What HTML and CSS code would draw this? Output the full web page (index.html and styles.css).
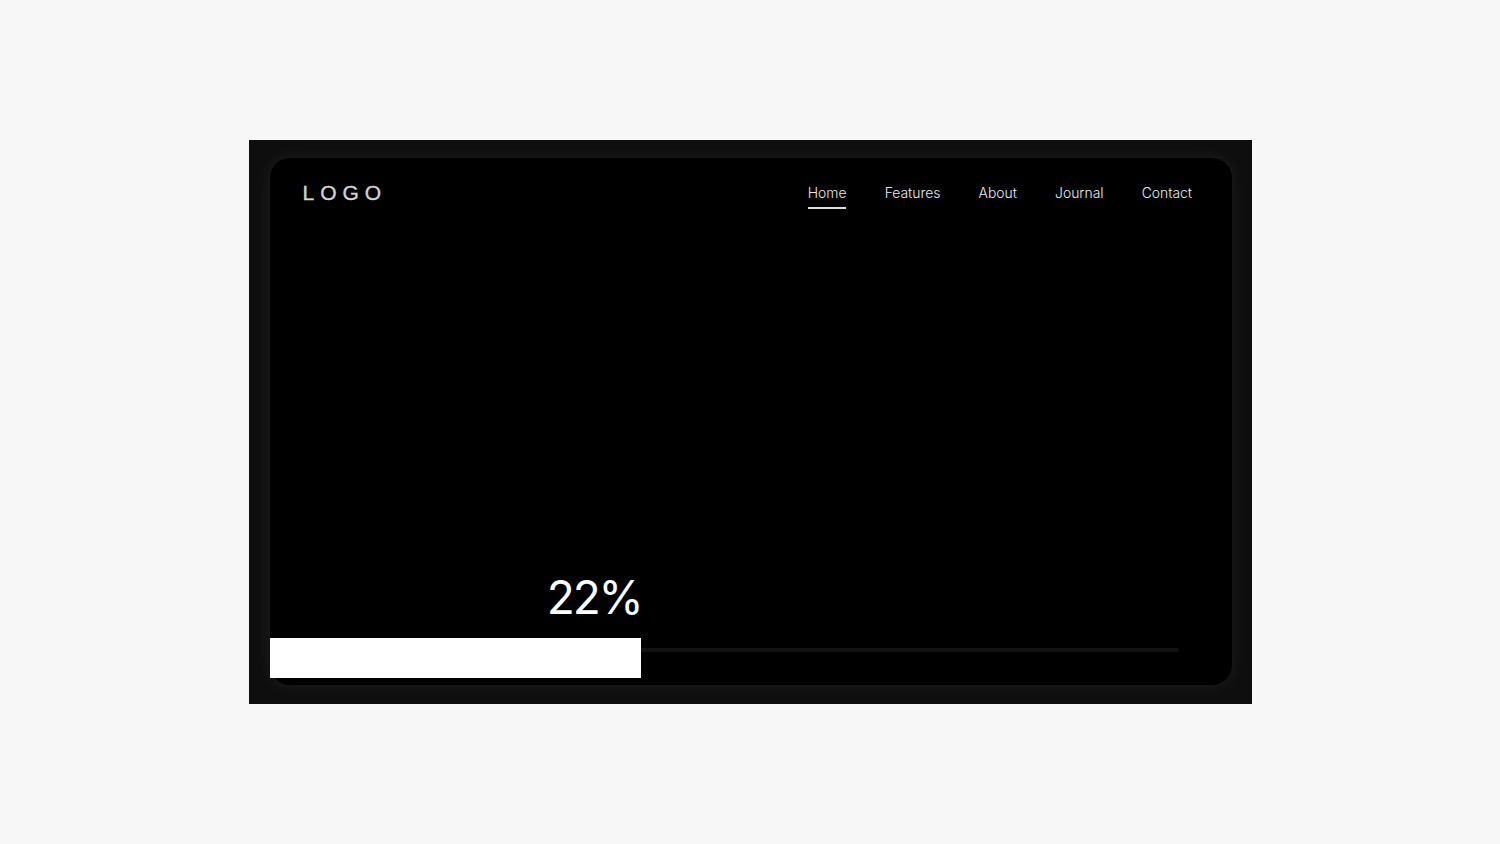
FILE: index.html
```html
<!DOCTYPE html>
<html lang="en">
<head>
<meta charset="utf-8">
<title>Loading</title>
<link rel="stylesheet" href="styles.css">
</head>
<body>
<main class="frame">
  <section class="screen">
    <header class="topbar">
      <div class="logo">LOGO</div>
      <nav class="nav">
        <a class="nav-link is-active" href="#">Home</a>
        <a class="nav-link" href="#">Features</a>
        <a class="nav-link" href="#">About</a>
        <a class="nav-link" href="#">Journal</a>
        <a class="nav-link" href="#">Contact</a>
      </nav>
    </header>
    <div class="loader">
      <div class="percent">22%</div>
      <div class="progress">
        <div class="progress-fill"></div>
        <div class="progress-track"></div>
      </div>
    </div>
  </section>
</main>
</body>
</html>
```
FILE: styles.css
```css
* { box-sizing: border-box; }
html, body { height: 100%; }
body {
  margin: 0;
  background: #f7f7f7;
  display: flex;
  align-items: center;
  justify-content: center;
  font-family: "Inter", "Liberation Sans", sans-serif;
}
.frame {
  width: 1003px;
  height: 564px;
  padding: 18px 20px 19px 21px;
  background: #0e0e0e;
  display: flex;
}
.screen {
  flex: 1;
  background: #000;
  border-radius: 20px;
  box-shadow: 0 0 14px 3px rgba(255, 255, 255, 0.05);
  display: flex;
  flex-direction: column;
  justify-content: space-between;
  padding-bottom: 7px;
}
.topbar {
  display: flex;
  justify-content: space-between;
  align-items: flex-start;
  padding: 24px 39.5px 0 33px;
}
.logo {
  margin-top: -1px;
  font-family: "Liberation Sans", sans-serif;
  font-size: 21px;
  line-height: 24px;
  letter-spacing: 6px;
  -webkit-text-stroke: 0.35px #d4d4d4;
  color: #d4d4d4;
}
.nav {
  display: flex;
  gap: 38.2px;
}
.nav-link {
  display: block;
  height: 27px;
  padding-top: 1px;
  font-size: 13.9px;
  font-weight: 300;
  line-height: 20px;
  color: #ececec;
  text-decoration: none;
}
.nav-link.is-active {
  border-bottom: 2px solid #dedede;
}
.loader {
  display: flex;
  flex-direction: column;
}
.percent {
  width: 372px;
  margin-bottom: 16px;
  text-align: right;
  font-size: 46px;
  font-weight: 400;
  line-height: 50px;
  letter-spacing: -2.2px;
  color: #fff;
}
.progress {
  display: flex;
  align-items: center;
  padding-right: 53px;
}
.progress-fill {
  width: 371px;
  height: 40px;
  background: #fff;
}
.progress-track {
  flex: 1;
  height: 4px;
  margin-top: -16px;
  background: #121212;
  border-radius: 0 2px 2px 0;
}
```
